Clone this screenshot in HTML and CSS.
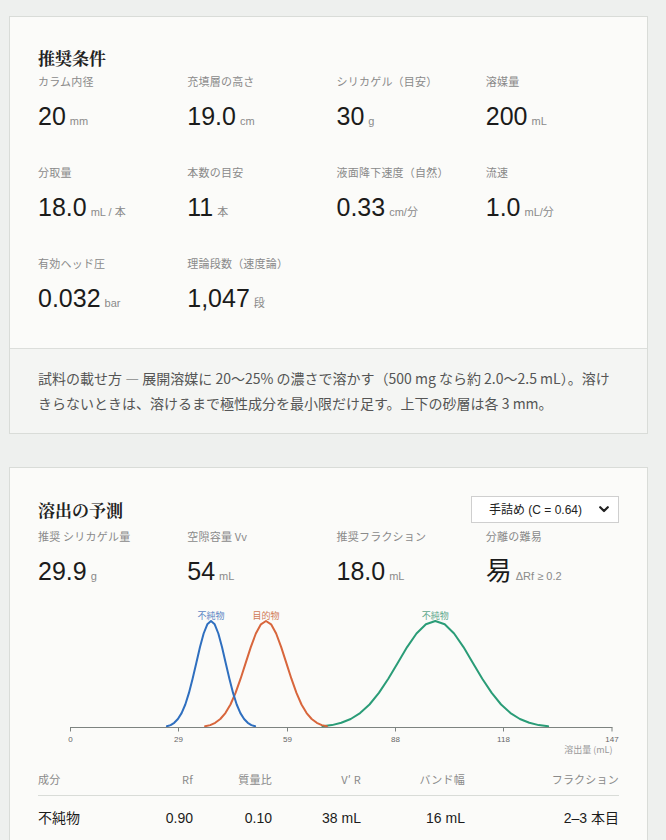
FILE: index.html
```html
<!DOCTYPE html>
<html lang="ja">
<head>
<meta charset="utf-8">
<title>推奨条件</title>
<link rel="stylesheet" href="styles.css">
</head>
<body>
<div class="page">
  <section class="card">
    <div class="card-main">
      <h2 class="card-title">推奨条件</h2>
      <div class="stats">
        <div class="stat"><div class="stat-label">カラム内径</div><div class="stat-value">20<span class="unit">mm</span></div></div>
        <div class="stat"><div class="stat-label">充填層の高さ</div><div class="stat-value">19.0<span class="unit">cm</span></div></div>
        <div class="stat"><div class="stat-label">シリカゲル（目安）</div><div class="stat-value">30<span class="unit">g</span></div></div>
        <div class="stat"><div class="stat-label">溶媒量</div><div class="stat-value">200<span class="unit">mL</span></div></div>
        <div class="stat"><div class="stat-label">分取量</div><div class="stat-value">18.0<span class="unit">mL / 本</span></div></div>
        <div class="stat"><div class="stat-label">本数の目安</div><div class="stat-value">11<span class="unit">本</span></div></div>
        <div class="stat"><div class="stat-label">液面降下速度（自然）</div><div class="stat-value">0.33<span class="unit">cm/分</span></div></div>
        <div class="stat"><div class="stat-label">流速</div><div class="stat-value">1.0<span class="unit">mL/分</span></div></div>
        <div class="stat"><div class="stat-label">有効ヘッド圧</div><div class="stat-value">0.032<span class="unit">bar</span></div></div>
        <div class="stat"><div class="stat-label">理論段数（速度論）</div><div class="stat-value">1,047<span class="unit">段</span></div></div>
      </div>
    </div>
    <p class="note">試料の載せ方 — 展開溶媒に 20〜25% の濃さで溶かす（500 mg なら約 2.0〜2.5 mL）。溶けきらないときは、溶けるまで極性成分を最小限だけ足す。上下の砂層は各 3 mm。</p>
  </section>

  <section class="card">
    <div class="card-main">
      <div class="card-head">
        <h2 class="card-title">溶出の予測</h2>
        <div class="select-wrap">
          <select class="select">
            <option>手詰め (C = 0.64)</option>
            <option>市販カラム (C = 0.70)</option>
          </select>
          <svg class="chev" width="10" height="7" viewBox="0 0 10 7"><path d="M1.2 1.2 L5 5 L8.8 1.2" fill="none" stroke="#222" stroke-width="2.2" stroke-linecap="round" stroke-linejoin="round"/></svg>
        </div>
      </div>
      <div class="stats">
        <div class="stat"><div class="stat-label">推奨 シリカゲル量</div><div class="stat-value">29.9<span class="unit">g</span></div></div>
        <div class="stat"><div class="stat-label">空隙容量 Vv</div><div class="stat-value">54<span class="unit">mL</span></div></div>
        <div class="stat"><div class="stat-label">推奨フラクション</div><div class="stat-value">18.0<span class="unit">mL</span></div></div>
        <div class="stat"><div class="stat-label">分離の難易</div><div class="stat-value"><span class="kanji">易</span><span class="unit">ΔRf ≥ 0.2</span></div></div>
      </div>

      <svg class="chart" width="581" height="166" viewBox="0 0 581 166">
        <polyline class="curve green" points="284.5,131.3 293.9,130.1 303.3,127.8 312.7,124.0 322.1,118.1 331.5,109.5 340.9,97.9 350.3,83.7 359.7,67.9 369.1,52.1 378.5,38.5 387.9,29.3 397.3,26 406.7,29.3 416.1,38.5 425.5,52.1 434.9,67.9 444.3,83.7 453.7,97.9 463.1,109.5 472.5,118.1 481.9,124.0 491.3,127.8 500.7,130.1 510.1,131.3"/>
        <polyline class="curve orange" points="167.1,131.3 172.2,130.1 177.25,127.8 182.3,124.0 187.4,118.1 192.5,109.5 197.55,97.9 202.6,83.7 207.7,67.9 212.8,52.1 217.85,38.5 222.9,29.3 228,26 233.1,29.3 238.15,38.5 243.2,52.1 248.3,67.9 253.4,83.7 258.45,97.9 263.5,109.5 268.6,118.1 273.7,124.0 278.75,127.8 283.8,130.1 288.9,131.3"/>
        <polyline class="curve blue" points="128.9,131.3 132.6,130.1 136.25,127.8 139.9,124.0 143.6,118.1 147.3,109.5 150.95,97.9 154.6,83.7 158.3,67.9 162,52.1 165.65,38.5 169.3,29.3 173,26 176.7,29.3 180.35,38.5 184,52.1 187.7,67.9 191.4,83.7 195.05,97.9 198.7,109.5 202.4,118.1 206.1,124.0 209.75,127.8 213.4,130.1 217.1,131.3"/>
        <text class="peak-label blue-t" x="173" y="24">不純物</text>
        <text class="peak-label orange-t" x="228" y="24">目的物</text>
        <text class="peak-label green-t" x="397.3" y="24">不純物</text>
        <line class="axis" x1="32" y1="132.5" x2="574.5" y2="132.5"/>
        <line class="tick" x1="32.5" y1="132.5" x2="32.5" y2="136.5"/>
        <line class="tick" x1="140.5" y1="132.5" x2="140.5" y2="136.5"/>
        <line class="tick" x1="249.5" y1="132.5" x2="249.5" y2="136.5"/>
        <line class="tick" x1="357.5" y1="132.5" x2="357.5" y2="136.5"/>
        <line class="tick" x1="465.5" y1="132.5" x2="465.5" y2="136.5"/>
        <line class="tick" x1="574" y1="132.5" x2="574" y2="136.5"/>
        <text class="tick-label" x="32.5" y="147">0</text>
        <text class="tick-label" x="140.5" y="147">29</text>
        <text class="tick-label" x="249.5" y="147">59</text>
        <text class="tick-label" x="357.5" y="147">88</text>
        <text class="tick-label" x="465.5" y="147">118</text>
        <text class="tick-label" x="574" y="147">147</text>
        <text class="axis-label" x="574.5" y="158">溶出量 (mL)</text>
      </svg>

      <table class="comp">
        <colgroup>
          <col class="c1"><col class="c2"><col class="c3"><col class="c4"><col class="c5"><col class="c6">
        </colgroup>
        <thead>
          <tr><th class="left">成分</th><th>Rf</th><th>質量比</th><th>V′ R</th><th>バンド幅</th><th>フラクション</th></tr>
        </thead>
        <tbody>
          <tr><td class="left">不純物</td><td>0.90</td><td>0.10</td><td>38 mL</td><td>16 mL</td><td>2–3 本目</td></tr>
          <tr><td class="left">目的物</td><td>0.65</td><td>0.80</td><td>53 mL</td><td>21 mL</td><td>3–4 本目</td></tr>
          <tr><td class="left">不純物</td><td>0.35</td><td>0.10</td><td>99 mL</td><td>41 mL</td><td>5–8 本目</td></tr>
        </tbody>
      </table>
    </div>
  </section>
</div>
</body>
</html>
```

FILE: styles.css
```css
* { box-sizing: border-box; }

html, body {
  margin: 0;
  padding: 0;
  background: #eef0ee;
}

body {
  font-family: "Liberation Sans", "Noto Sans CJK JP", sans-serif;
  color: #1b1b1b;
}

.page {
  padding: 16px 18px 40px 9px;
  display: flex;
  flex-direction: column;
  gap: 33px;
}

.card {
  background: #fbfbf9;
  border: 1px solid #d9dcd8;
}

.card-main {
  padding: 31px 28px 35px 28px;
}

.card-title {
  margin: 0 0 5px 0;
  font-family: "Noto Serif CJK JP", "Liberation Serif", serif;
  font-weight: bold;
  font-size: 17px;
  line-height: 20px;
  color: #222;
}

.card-head {
  display: flex;
  align-items: center;
  justify-content: space-between;
  margin-bottom: 5px;
}

.card-head .card-title { margin: 0; }

.card + .card .card-main { padding-top: 28px; }

.select-wrap {
  position: relative;
  width: 148px;
  height: 27px;
}

.select {
  appearance: none;
  -webkit-appearance: none;
  width: 148px;
  height: 27px;
  margin: 0;
  padding: 0 0 0 17px;
  border: 1px solid #cfcfcf;
  border-radius: 0;
  background: #fff;
  font-family: "Liberation Sans", "Noto Sans CJK JP", sans-serif;
  font-size: 12px;
  color: #222;
}

.chev {
  position: absolute;
  right: 10px;
  top: 10px;
  pointer-events: none;
}

.stats {
  display: grid;
  grid-template-columns: repeat(4, 1fr);
  column-gap: 16px;
  row-gap: 33px;
}

.stat-label {
  font-family: "Noto Sans CJK JP", "Liberation Sans", sans-serif;
  font-size: 11px;
  line-height: 16px;
  height: 16px;
  letter-spacing: 0.02em;
  color: #8a8a8a;
  margin-bottom: 12px;
  white-space: nowrap;
}

.stat-value {
  font-size: 25px;
  line-height: 30px;
  height: 30px;
  color: #1b1b1b;
  white-space: nowrap;
}

.kanji {
  font-family: "Noto Sans CJK JP", sans-serif;
  font-size: 26px;
  line-height: 1;
}

.unit {
  font-family: "Liberation Sans", "Noto Sans CJK JP", sans-serif;
  font-size: 11px;
  line-height: 1;
  color: #8a8a8a;
  margin-left: 4px;
}

.note {
  margin: 0;
  padding: 17px 29px 17px 28px;
  background: #f4f5f3;
  border-top: 1px solid #dcdedb;
  font-family: "Noto Sans CJK JP", sans-serif;
  font-size: 14px;
  line-height: 25px;
  color: #555;
}

.chart {
  display: block;
  margin-top: 9px;
  overflow: visible;
}

.curve {
  fill: none;
  stroke-width: 2;
  stroke-linejoin: round;
  stroke-linecap: round;
}
.curve.blue { stroke: #2f6fbf; }
.curve.orange { stroke: #d8663c; }
.curve.green { stroke: #2a9c77; }

.peak-label {
  font-family: "Noto Sans CJK JP", sans-serif;
  font-size: 9px;
  text-anchor: middle;
}
.blue-t { fill: #5b86c4; }
.orange-t { fill: #d07a55; }
.green-t { fill: #5ea78c; }

.axis, .tick {
  stroke: #7d8380;
  stroke-width: 1;
}

.tick-label {
  font-family: "Liberation Sans", sans-serif;
  font-size: 8px;
  fill: #666;
  text-anchor: middle;
}

.axis-label {
  font-family: "Noto Sans CJK JP", sans-serif;
  font-size: 9px;
  fill: #999;
  text-anchor: end;
}

.comp {
  margin-top: 10px;
  width: 581px;
  border-collapse: collapse;
  table-layout: fixed;
}

.c1 { width: 100px; }
.c2 { width: 55px; }
.c3 { width: 79px; }
.c4 { width: 89px; }
.c5 { width: 104px; }
.c6 { width: 154px; }

.comp th {
  font-family: "Noto Sans CJK JP", "Liberation Sans", sans-serif;
  font-weight: normal;
  font-size: 11px;
  line-height: 16px;
  letter-spacing: 0.02em;
  color: #8a8a8a;
  text-align: right;
  padding: 0 0 8px 0;
  border-bottom: 1px solid #d9dcd8;
}

.comp td {
  font-family: "Liberation Sans", "Noto Sans CJK JP", sans-serif;
  font-size: 14px;
  line-height: 20px;
  color: #1b1b1b;
  text-align: right;
  padding: 12px 0 8px 0;
}

.comp .left { text-align: left; }
```
